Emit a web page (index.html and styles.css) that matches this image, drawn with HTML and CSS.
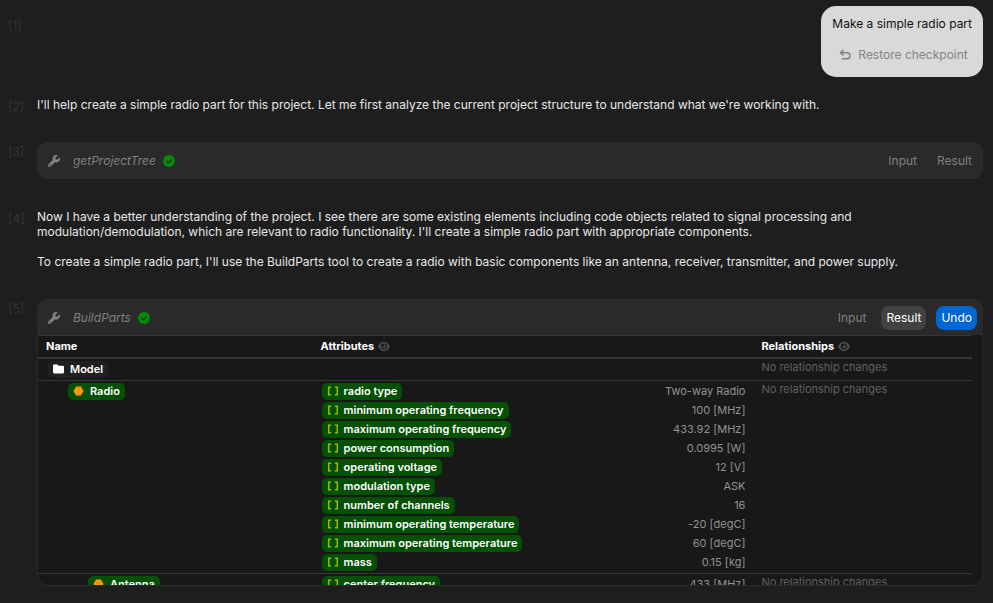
FILE: index.html
```html
<!DOCTYPE html>
<html lang="en">
<head>
<meta charset="utf-8">
<title>Assistant chat</title>
<link rel="stylesheet" href="styles.css">
</head>
<body>
<svg class="defs" aria-hidden="true">
  <symbol id="wrench" viewBox="0 0 512 512"><path d="M352 320c88.400 0 160-71.600 160-160c0-15.300-2.200-30.100-6.200-44.200c-3.100-10.800-16.400-13.200-24.300-5.300l-76.800 76.800c-3 3-7.100 4.700-11.300 4.700H336c-8.800 0-16-7.200-16-16V118.600c0-4.200 1.700-8.300 4.700-11.300l76.800-76.800c7.900-7.900 5.400-21.200-5.300-24.300C382.100 2.200 367.300 0 352 0C263.600 0 192 71.600 192 160c0 19.100 3.400 37.500 9.500 54.500L19.900 396.100C7.200 408.800 0 426.100 0 444.100C0 481.600 30.400 512 67.900 512c18 0 35.300-7.200 48-19.900L297.500 310.500c17 6.200 35.400 9.500 54.500 9.500zM80 408a24 24 0 1 1 0 48 24 24 0 1 1 0-48z"/></symbol>
  <symbol id="check" viewBox="0 0 12 12"><circle cx="6" cy="6" r="6" fill="#058a05"/><path d="M3.500 6.200 5.300 7.900 8.600 4.400" fill="none" stroke="#222" stroke-width="1.200"/></symbol>
  <symbol id="eye" viewBox="0 0 576 512"><path fill-rule="evenodd" d="M288 32c-80.800 0-145.500 36.800-192.600 80.600C48.600 156 17.300 208 2.500 243.700c-3.300 7.900-3.300 16.700 0 24.600C17.300 304 48.600 356 95.400 399.400C142.500 443.200 207.200 480 288 480s145.500-36.800 192.600-80.600c46.800-43.500 78.100-95.400 93-131.100c3.300-7.900 3.300-16.700 0-24.600c-14.900-35.700-46.200-87.700-93-131.100C433.500 68.800 368.800 32 288 32zM144 256a144 144 0 1 1 288 0 144 144 0 1 1-288 0zm144-64c0 35.300-28.700 64-64 64c-7.100 0-13.900-1.200-20.300-3.300c-5.500-1.800-11.900 1.600-11.700 7.400c.3 6.900 1.300 13.800 3.200 20.700c13.700 51.200 66.400 81.600 117.600 67.900s81.600-66.400 67.900-117.600c-11.100-41.500-47.800-69.400-88.600-71.100c-5.800-.2-9.200 6.100-7.400 11.700c2.100 6.400 3.300 13.200 3.300 20.300z"/></symbol>
  <symbol id="brackets" viewBox="0 0 11 10"><path d="M4 1.200H1.700V8.800H4M8 1.200H10.300V8.800H8" fill="none" stroke="#a3b800" stroke-width="1.500"/></symbol>
  <symbol id="hexagon" viewBox="0 0 10 10"><path d="M2.500 .5h5L10 5 7.500 9.500h-5L0 5z" fill="#ff9800"/></symbol>
  <symbol id="folder" viewBox="0 0 10 8"><path d="M1 0h3l1 1h4q1 0 1 1v5q0 1-1 1H1Q0 8 0 7V1Q0 0 1 0z" fill="#fff"/></symbol>
  <symbol id="restore" viewBox="0 0 12 12"><path d="M4.500 .9 1.500 3.700 4.500 6.500M1.500 3.700H8a3 3 0 0 1 0 6H3" fill="none" stroke="#808080" stroke-width="1.500"/></symbol>
</svg>
<main class="chat">
  <section class="message user">
    <span class="index">[1]</span>
    <div class="bubble">
      <p>Make a simple radio part</p>
      <button class="restore"><svg><use href="#restore"/></svg>Restore checkpoint</button>
    </div>
  </section>
  <section class="message">
    <span class="index">[2]</span>
    <p>I'll help create a simple radio part for this project. Let me first analyze the current project structure to understand what we're working with.</p>
  </section>
  <section class="message">
    <span class="index">[3]</span>
    <div class="tool">
      <header class="tool-bar">
        <svg class="wrench"><use href="#wrench"/></svg>
        <span class="tool-name">getProjectTree</span>
        <svg class="check"><use href="#check"/></svg>
        <div class="actions"><button>Input</button><button>Result</button></div>
      </header>
    </div>
  </section>
  <section class="message">
    <span class="index">[4]</span>
    <div class="prose">
      <p>Now I have a better understanding of the project. I see there are some existing elements including code objects related to signal processing and modulation/demodulation, which are relevant to radio functionality. I'll create a simple radio part with appropriate components.</p>
      <p>To create a simple radio part, I'll use the BuildParts tool to create a radio with basic components like an antenna, receiver, transmitter, and power supply.</p>
    </div>
  </section>
  <section class="message">
    <span class="index">[5]</span>
    <div class="tool">
      <header class="tool-bar">
        <svg class="wrench"><use href="#wrench"/></svg>
        <span class="tool-name">BuildParts</span>
        <svg class="check"><use href="#check"/></svg>
        <div class="actions"><button>Input</button><button class="active">Result</button><button class="undo">Undo</button></div>
      </header>
      <div class="result">
        <table>
          <colgroup><col class="col-name"><col class="col-attributes"><col></colgroup>
          <thead>
            <tr><th>Name</th><th>Attributes <svg class="eye"><use href="#eye"/></svg></th><th>Relationships <svg class="eye"><use href="#eye"/></svg></th></tr>
          </thead>
          <tbody>
            <tr>
              <td><span class="tag plain"><svg><use href="#folder"/></svg>Model</span></td>
              <td></td>
              <td class="none">No relationship changes</td>
            </tr>
            <tr>
              <td class="level-1"><span class="tag"><svg><use href="#hexagon"/></svg>Radio</span></td>
              <td>
                <ul>
                  <li><span class="tag"><svg><use href="#brackets"/></svg>radio type</span><span>Two-way Radio</span></li>
                  <li><span class="tag"><svg><use href="#brackets"/></svg>minimum operating frequency</span><span>100 [MHz]</span></li>
                  <li><span class="tag"><svg><use href="#brackets"/></svg>maximum operating frequency</span><span>433.92 [MHz]</span></li>
                  <li><span class="tag"><svg><use href="#brackets"/></svg>power consumption</span><span>0.0995 [W]</span></li>
                  <li><span class="tag"><svg><use href="#brackets"/></svg>operating voltage</span><span>12 [V]</span></li>
                  <li><span class="tag"><svg><use href="#brackets"/></svg>modulation type</span><span>ASK</span></li>
                  <li><span class="tag"><svg><use href="#brackets"/></svg>number of channels</span><span>16</span></li>
                  <li><span class="tag"><svg><use href="#brackets"/></svg>minimum operating temperature</span><span>-20 [degC]</span></li>
                  <li><span class="tag"><svg><use href="#brackets"/></svg>maximum operating temperature</span><span>60 [degC]</span></li>
                  <li><span class="tag"><svg><use href="#brackets"/></svg>mass</span><span>0.15 [kg]</span></li>
                </ul>
              </td>
              <td class="none">No relationship changes</td>
            </tr>
            <tr>
              <td class="level-2"><span class="tag"><svg><use href="#hexagon"/></svg>Antenna</span></td>
              <td>
                <ul>
                  <li><span class="tag"><svg><use href="#brackets"/></svg>center frequency</span><span>433 [MHz]</span></li>
                </ul>
              </td>
              <td class="none">No relationship changes</td>
            </tr>
          </tbody>
        </table>
      </div>
    </div>
  </section>
</main>
</body>
</html>
```
FILE: styles.css
```css
* {
  box-sizing: border-box;
}

body {
  margin: 0;
  background: #1e1e1e;
  color: #e8e8e8;
  font: 12px/15px Inter, sans-serif;
}

p,
ul {
  margin: 0;
  padding: 0;
}

ul {
  display: grid;
  gap: 2px;
  list-style: none;
}

svg {
  flex: none;
}

.defs {
  display: none;
}

button {
  border: 0;
  background: none;
  color: inherit;
  font: inherit;
}

.chat {
  display: flex;
  flex-direction: column;
  gap: 30px;
  padding: 6px 10px 16px 0;
}

.message {
  display: grid;
  grid-template-columns: 29px minmax(0, 1fr);
  padding-left: 8px;
}

.index {
  margin-bottom: -2px;
  padding-top: 2px;
  color: #343434;
}

.user {
  margin-bottom: -10px;
}

.user .index {
  padding-top: 12px;
}

.bubble {
  justify-self: end;
  padding: 10px 11px;
  border-radius: 15px;
  background: #d9d9d9;
  color: #111;
}

.restore {
  display: flex;
  align-items: center;
  gap: 7px;
  margin-top: 10px;
  padding: 6px 4px 5px 7px;
  color: #858585;
}

.restore svg {
  width: 12px;
  height: 12px;
}

.prose {
  display: grid;
  gap: 15px;
}

.tool {
  overflow: hidden;
  border: 1px solid #2b2b2b;
  border-radius: 10px;
  background: #2a2a2a;
}

.tool-bar {
  display: flex;
  align-items: center;
  height: 35px;
  padding: 0 5px 0 10px;
  color: #808080;
}

.wrench {
  width: 12px;
  height: 12px;
  margin-right: 13px;
  fill: #808080;
}

.tool-name {
  margin-right: 7px;
  font-style: italic;
}

.check {
  width: 12px;
  height: 12px;
}

.actions {
  display: flex;
  gap: 10px;
  margin-left: auto;
}

.actions button {
  height: 24px;
  padding: 0 5px;
  border-radius: 8px;
}

.actions .active {
  background: #424242;
  color: #fff;
}

.actions .undo {
  background: #0066d1;
  color: #fff;
}

.result {
  height: 250px;
  overflow: hidden;
  padding-right: 10px;
  background: #181818;
}

table {
  width: 100%;
  table-layout: fixed;
  border-collapse: separate;
  border-spacing: 0;
  font-size: 11px;
}

.col-name {
  width: 29.4%;
}

.col-attributes {
  width: 47.2%;
}

th {
  height: 24px;
  padding: 0 8px;
  border-top: 1px solid #363636;
  border-bottom: 2px solid #363636;
  color: #fff;
  text-align: left;
}

td {
  padding: 2px 8px;
  border-bottom: 1px solid #363636;
  vertical-align: top;
}

.eye {
  width: 12px;
  height: 11px;
  margin-left: 1px;
  fill: #4a4a4a;
  vertical-align: -2px;
}

.none {
  padding-top: 1px;
  color: #606060;
}

.level-1 {
  padding-left: 30px;
}

.level-2 {
  padding-left: 50px;
}

.tag {
  display: inline-flex;
  align-items: center;
  gap: 6px;
  height: 17px;
  padding: 0 5px 1px;
  border-radius: 5px;
  background: #045004;
  color: #fff;
  font-weight: 600;
  line-height: 14px;
  vertical-align: top;
}

.tag svg {
  width: 11px;
  height: 10px;
}

.plain {
  margin-left: 2px;
  background: #202020;
}

li {
  display: flex;
  justify-content: space-between;
  align-items: center;
  height: 17px;
  padding-left: 1px;
  color: #929292;
}
```
